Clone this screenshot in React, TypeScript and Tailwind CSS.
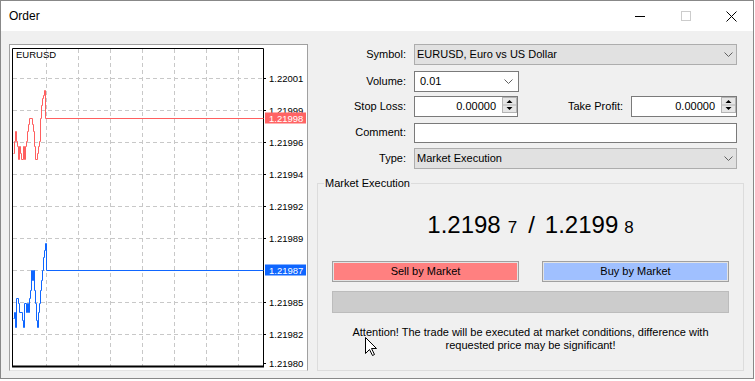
import React from 'react';

const GRID_X = [46, 78, 110, 142, 174, 206, 238];
const GRID_Y = [78, 110, 142, 174, 206, 238, 270, 302, 334];

const AXIS_LABELS = [
  { y: 78, text: '1.22001' },
  { y: 110, text: '1.21999' },
  { y: 142, text: '1.21996' },
  { y: 174, text: '1.21994' },
  { y: 206, text: '1.21992' },
  { y: 238, text: '1.21989' },
  { y: 302, text: '1.21985' },
  { y: 334, text: '1.21982' },
  { y: 363, text: '1.21980' },
];

const ASK_POINTS =
  '13,153 14,153 14,141 15,141 15,131 16,131 16,141 17,141 17,146 18,146 18,159 19,159 19,146 20,146 20,153 21,153 21,159 23,159 23,146 24,146 24,159 25,159 25,146 26,146 26,141 27,141 27,131 28,131 28,124 29,124 29,118 32,118 32,124 33,124 33,131 34,131 34,146 35,146 35,159 37,159 37,153 38,153 38,146 39,146 39,141 40,141 40,118 41,118 41,105 42,105 42,98 43,98 43,95 44,95 44,90 45,90 45,118 263,118';

const BID_POINTS =
  '13,318 14,318 14,312 15,312 15,327 16,327 16,298 18,298 18,303 19,303 19,312 22,312 22,320 23,320 23,327 24,327 24,303 26,303 26,312 27,312 27,303 28,303 28,312 29,312 29,298 30,298 30,290 31,290 31,270 32,270 32,280 33,280 33,270 34,270 34,290 35,290 35,303 36,303 36,320 37,320 37,327 38,327 38,312 39,312 39,303 40,303 40,290 41,290 41,280 42,280 42,270 43,270 43,257 44,257 44,250 45,250 45,243 46,243 46,270 263,270';

const chartFont = 'Liberation Sans, Arial, sans-serif';

const TickChart: React.FC = () => (
  <svg width={297} height={325} viewBox="10 45 297 325" className="block">
    <g stroke="#c8c8c8" strokeWidth={1} strokeDasharray="4 3">
      {GRID_X.map((x) => (
        <line key={x} x1={x + 0.5} y1={49} x2={x + 0.5} y2={366} />
      ))}
      {GRID_Y.map((y) => (
        <line key={y} x1={13} y1={y + 0.5} x2={263} y2={y + 0.5} />
      ))}
    </g>
    <g stroke="#000" strokeWidth={1}>
      <line x1={12.5} y1={48.5} x2={263.5} y2={48.5} />
      <line x1={12.5} y1={48.5} x2={12.5} y2={367} />
      <line x1={263.5} y1={48.5} x2={263.5} y2={367} />
      <line x1={12} y1={366.5} x2={264} y2={366.5} strokeWidth={2} />
      {AXIS_LABELS.map((l) => (
        <line key={l.y} x1={263} y1={l.y + 0.5} x2={266} y2={l.y + 0.5} />
      ))}
    </g>
    <g transform="translate(0.5 0.5)" fill="none" strokeWidth={1}>
      <polyline points={ASK_POINTS} stroke="#ff5f5f" />
      <polyline points={BID_POINTS} stroke="#0f66ff" />
    </g>
    <text x={16} y={58} fontSize={9.5} fontFamily={chartFont} fill="#000">
      EURUSD
    </text>
    {AXIS_LABELS.map((l) => (
      <text key={l.text} x={269} y={l.y + 3.5} fontSize={9.5} fontFamily={chartFont} fill="#000">
        {l.text}
      </text>
    ))}
    <rect x={265} y={112.5} width={41} height={11} fill="#ff6464" />
    <text x={269} y={121.5} fontSize={9.5} fontFamily={chartFont} fill="#fff">
      1.21998
    </text>
    <rect x={265} y={264.5} width={41} height={11} fill="#0f66ff" />
    <text x={269} y={273.5} fontSize={9.5} fontFamily={chartFont} fill="#fff">
      1.21987
    </text>
  </svg>
);

const Chevron: React.FC = () => (
  <svg width={9} height={5} viewBox="0 0 9 5" className="shrink-0">
    <polyline points="0.5,0.5 4.5,4.5 8.5,0.5" fill="none" stroke="#606060" strokeWidth={1} />
  </svg>
);

const Spinner: React.FC = () => (
  <svg width={15} height={16} viewBox="0 0 15 16" className="shrink-0 self-start">
    <rect x={0.5} y={0.5} width={14} height={15} fill="#e6e6e6" stroke="#b4b4b4" />
    <line x1={1} y1={8} x2={14} y2={8} stroke="#b4b4b4" />
    <polygon points="4.5,6 10.5,6 7.5,3" fill="#000" />
    <polygon points="4.5,10 10.5,10 7.5,13" fill="#000" />
  </svg>
);

const FieldLabel: React.FC<{ children: React.ReactNode }> = ({ children }) => (
  <div className="w-[98px] shrink-0 text-right">{children}</div>
);

export default function App() {
  return (
    <div className="relative h-[381px] w-[755px] overflow-hidden bg-white font-['Liberation_Sans',Arial,sans-serif] text-[11px] leading-[13px] text-black">
      <div className="flex h-[379px] w-[754px] flex-col border border-[#888888] bg-[#f0f0f0]">
        {/* title bar */}
        <div className="flex h-[30px] shrink-0 items-center bg-white">
          <span className="ml-[8px] text-[12px] leading-[14px]">Order</span>
          <div className="ml-auto flex h-full">
            <div className="flex w-[46px] items-center justify-center">
              <div className="h-px w-[10px] bg-black" />
            </div>
            <div className="flex w-[46px] items-center justify-center">
              <div className="h-[10px] w-[10px] border border-[#cccccc]" />
            </div>
            <div className="flex w-[44px] items-center justify-center">
              <svg width={11} height={11} viewBox="0 0 11 11">
                <path d="M0.5 0.5 L10.5 10.5 M10.5 0.5 L0.5 10.5" stroke="#000" strokeWidth={1} />
              </svg>
            </div>
          </div>
        </div>

        <div className="flex flex-1">
          {/* chart panel */}
          <div className="ml-[8px] mt-[13px] h-[327px] w-[299px] shrink-0 border border-[#a0a0a0] border-b-[#e3e3e3] bg-white">
            <TickChart />
          </div>

          {/* order form */}
          <div className="flex flex-1 flex-col pt-[13px]">
            <div className="flex h-[21px] items-center">
              <FieldLabel>Symbol:</FieldLabel>
              <div className="ml-[8px] flex h-[21px] w-[323px] items-center border border-[#adadad] bg-[#e1e1e1] pl-[2px] pr-[3px]">
                <span className="flex-1">EURUSD, Euro vs US Dollar</span>
                <Chevron />
              </div>
            </div>

            <div className="mt-[6px] flex h-[21px] items-center">
              <FieldLabel>Volume:</FieldLabel>
              <div className="ml-[8px] flex h-[21px] w-[105px] items-center border border-[#7a7a7a] bg-white pl-[5px] pr-[5px]">
                <span className="flex-1">0.01</span>
                <Chevron />
              </div>
            </div>

            <div className="mt-[4px] flex h-[21px] items-center">
              <FieldLabel>Stop Loss:</FieldLabel>
              <div className="ml-[8px] flex h-[21px] w-[104px] items-center border border-[#7a7a7a] bg-white">
                <span className="flex-1 pr-[6px] text-right">0.00000</span>
                <Spinner />
              </div>
              <div className="flex-1 text-right">Take Profit:</div>
              <div className="ml-[8px] flex h-[21px] w-[106px] items-center border border-[#7a7a7a] bg-white">
                <span className="flex-1 pr-[6px] text-right">0.00000</span>
                <Spinner />
              </div>
              <div className="w-[16px]" />
            </div>

            <div className="mt-[5px] flex h-[21px] items-center">
              <FieldLabel>Comment:</FieldLabel>
              <div className="ml-[8px] h-[20px] w-[323px] border border-[#7a7a7a] bg-white" />
            </div>

            <div className="mt-[5px] flex h-[21px] items-center">
              <FieldLabel>Type:</FieldLabel>
              <div className="ml-[8px] flex h-[21px] w-[323px] items-center border border-[#adadad] bg-[#e1e1e1] pl-[2px] pr-[3px]">
                <span className="flex-1">Market Execution</span>
                <Chevron />
              </div>
            </div>

            {/* market execution group */}
            <div className="ml-[9px] mt-[14px] flex h-[188px] w-[427px] flex-col border border-[#dcdcdc]">
              <div className="-mt-[7px] ml-[6px] w-fit bg-[#f0f0f0] px-[1px]">Market Execution</div>

              <div className="mt-[21px] flex items-baseline justify-center text-[24px] leading-[28px]">
                <span>1.2198</span>
                <span className="ml-[7px] text-[17px]">7</span>
                <span className="ml-[11px]">/</span>
                <span className="ml-[10px]">1.2199</span>
                <span className="ml-[6px] text-[17px]">8</span>
              </div>

              <div className="mt-[19px] flex justify-between px-[14px]">
                <div className="h-[21px] w-[187px] border border-[#a0a0a0] bg-[#e3e3e3] p-px">
                  <div className="flex h-full items-center justify-center bg-[#ff8080]">Sell by Market</div>
                </div>
                <div className="h-[21px] w-[187px] border border-[#a0a0a0] bg-[#e3e3e3] p-px">
                  <div className="flex h-full items-center justify-center bg-[#a0c0ff]">Buy by Market</div>
                </div>
              </div>

              <div className="mt-[9px] px-[14px]">
                <div className="h-[22px] border border-[#bcbcbc] bg-[#cccccc]" />
              </div>

              <p className="mt-[13px] text-center leading-[13px]">
                Attention! The trade will be executed at market conditions, difference with
                <br />
                requested price may be significant!
              </p>
            </div>
          </div>
        </div>
      </div>

      {/* mouse pointer */}
      <svg width={13} height={20} viewBox="0 0 13 20" className="absolute left-[365px] top-[337px]">
        <path d="M0.5 0.5 L0.5 16.5 L4.5 12.5 L7.5 18.5 L9.5 17.5 L6.5 11.5 L11.5 11.5 Z" fill="#fff" stroke="#000" strokeWidth={1} />
      </svg>
    </div>
  );
}
